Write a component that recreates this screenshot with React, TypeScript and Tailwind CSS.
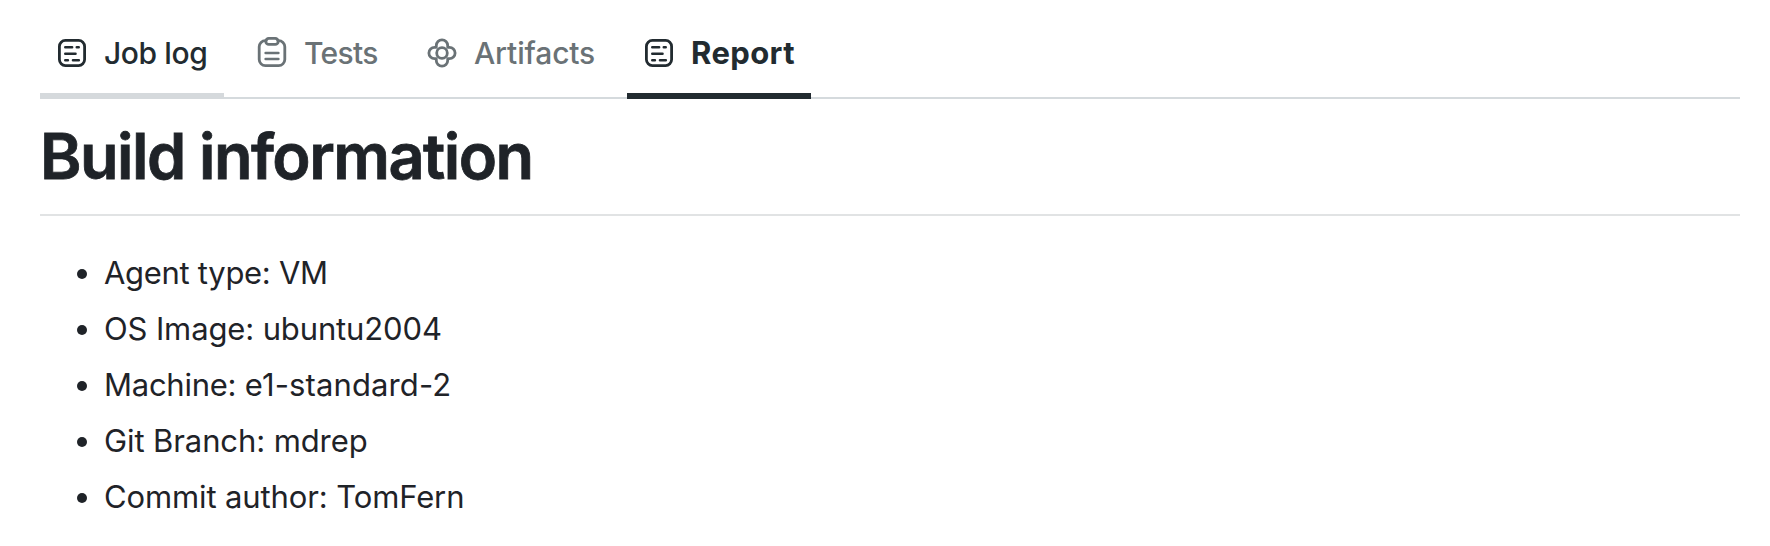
import type { ReactNode } from "react";

function LogIcon() {
  return (
    <svg width="32" height="32" viewBox="0 0 32 32" fill="none" stroke="currentColor" strokeWidth="2.8" strokeLinecap="round">
      <rect x="3.4" y="3.4" width="25.2" height="25.2" rx="6" />
      <path d="M9.3 10.3h6.8M20.8 10.3h1.9M9.3 16.8h10.2M9.3 23.2h2.6M17 23.2h5.8" strokeWidth="2.6" />
    </svg>
  );
}

function ClipboardIcon() {
  return (
    <svg width="32" height="32" viewBox="0 0 32 32" fill="none" stroke="currentColor" strokeWidth="2.8" strokeLinecap="round" strokeLinejoin="round">
      <path d="M10.2 3.6H9.4a6.2 6.2 0 0 0-6.2 6.2v12.7a6.2 6.2 0 0 0 6.2 6.2h13.2a6.2 6.2 0 0 0 6.2-6.2V9.8a6.2 6.2 0 0 0-6.2-6.2h-.8" />
      <rect x="9.8" y="1.4" width="12.4" height="6" rx="3" />
      <path d="M9.6 16h12.8M9.6 22h12.8" strokeWidth="2.5" />
    </svg>
  );
}

function FlowerIcon() {
  return (
    <svg width="32" height="32" viewBox="0 0 32 32" fill="none" stroke="currentColor" strokeWidth="2.8" strokeLinejoin="round">
      <circle cx="16" cy="16" r="5.3" />
      <path d="M10.3 10.3V8.6a5.7 5.7 0 0 1 11.4 0v1.7h1.7a5.7 5.7 0 0 1 0 11.4h-1.7v1.7a5.7 5.7 0 0 1-11.4 0v-1.7H8.6a5.7 5.7 0 0 1 0-11.4z" />
    </svg>
  );
}

function Tab({ icon, children, className }: { icon: ReactNode; children: ReactNode; className: string }) {
  return (
    <button className={`flex h-[99px] items-start border-b-6 pl-4 pt-[37px] ${className}`}>
      {icon}
      <span className="-mt-[2px] ml-4 whitespace-nowrap text-left leading-9">{children}</span>
    </button>
  );
}

function Dot() {
  return <span className="ml-[37px] mr-[17px] mt-[2px] size-[10px] rounded-full bg-[#1f2328]" />;
}

export default function App() {
  return (
    <main className="h-[546px] bg-white pl-10 pr-[30px] font-['Inter',sans-serif] text-[#1f2328]">
      <nav className="flex h-[99px] gap-4 bg-[linear-gradient(#d5dadd,#d5dadd)] bg-[length:100%_2px] bg-bottom bg-no-repeat text-[30px] font-medium">
        <Tab icon={<LogIcon />} className="w-[184px] border-[#d5d9dc] text-[#222b30]">
          <span className="tracking-[-0.4px]">Job log</span>
        </Tab>
        <Tab icon={<ClipboardIcon />} className="w-[154px] border-transparent text-[#6a7276]">
          <span className="tracking-[-0.7px]">Tests</span>
        </Tab>
        <Tab icon={<FlowerIcon />} className="w-[201px] border-transparent text-[#6a7276]">
          <span className="tracking-[-0.15px]">Artifacts</span>
        </Tab>
        <Tab icon={<LogIcon />} className="w-[184px] border-[#222b30] text-[31px] font-bold text-[#222b30]">
          <span className="tracking-[0.4px]">Report</span>
        </Tab>
      </nav>
      <h1 className="h-[117px] border-b-2 border-[#e1e3e4] pt-[17px] text-[63px] font-semibold leading-[80px] tracking-[-1.55px] [-webkit-text-stroke:0.8px_#1f2328]">
        Build information
      </h1>
      <ul className="list-none pt-[32px] text-[31px] leading-[50px]">
        <li className="mb-1.5 flex items-center"><Dot /><span className="tracking-[-0.3px]">Agent type: VM</span></li>
        <li className="mb-1.5 flex items-center"><Dot /><span className="tracking-[-0.13px]">OS Image: ubuntu2004</span></li>
        <li className="mb-1.5 flex items-center"><Dot /><span><span className="tracking-[-0.25px]">Machine: </span><span className="tracking-[0.13px]">e1-standard-2</span></span></li>
        <li className="mb-1.5 flex items-center"><Dot /><span className="tracking-[-0.1px]">Git Branch: mdrep</span></li>
        <li className="mb-1.5 flex items-center"><Dot /><span className="tracking-[-0.12px]">Commit author: TomFern</span></li>
      </ul>
    </main>
  );
}
